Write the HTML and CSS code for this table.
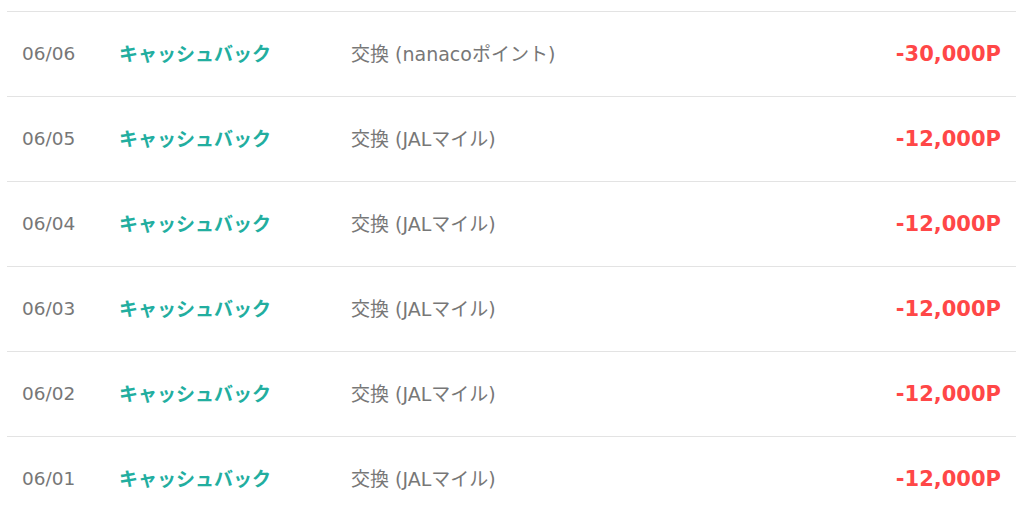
FILE: index.html
```html
<!DOCTYPE html>
<html lang="ja">
<head>
<meta charset="utf-8">
<link rel="stylesheet" href="styles.css">
</head>
<body>
<ul class="history">
  <li class="row"><span class="date">06/06</span><span class="cat">キャッシュバック</span><span class="desc">交換 (nanacoポイント)</span><span class="amount">-30,000P</span></li>
  <li class="row"><span class="date">06/05</span><span class="cat">キャッシュバック</span><span class="desc">交換 (JALマイル)</span><span class="amount">-12,000P</span></li>
  <li class="row"><span class="date">06/04</span><span class="cat">キャッシュバック</span><span class="desc">交換 (JALマイル)</span><span class="amount">-12,000P</span></li>
  <li class="row"><span class="date">06/03</span><span class="cat">キャッシュバック</span><span class="desc">交換 (JALマイル)</span><span class="amount">-12,000P</span></li>
  <li class="row"><span class="date">06/02</span><span class="cat">キャッシュバック</span><span class="desc">交換 (JALマイル)</span><span class="amount">-12,000P</span></li>
  <li class="row"><span class="date">06/01</span><span class="cat">キャッシュバック</span><span class="desc">交換 (JALマイル)</span><span class="amount">-12,000P</span></li>
</ul>
</body>
</html>
```
FILE: styles.css
```css
html, body {
  margin: 0;
  padding: 0;
  background: #fff;
}
body {
  font-family: "DejaVu Sans", "Noto Sans CJK JP", sans-serif;
  overflow: hidden;
}
.history {
  list-style: none;
  margin: 11px 8px 0 7px;
  padding: 0;
  border-top: 1px solid #e3e3e3;
}
.row {
  display: flex;
  align-items: center;
  height: 84px;
  border-bottom: 1px solid #e3e3e3;
  padding: 0 15px 0 15px;
}
.date {
  width: 97px;
  font-size: 18.5px;
  line-height: 1;
  color: #777;
}
.cat {
  width: 232px;
  font-size: 19px;
  line-height: 1;
  font-weight: bold;
  color: #22ae9f;
}
.desc {
  flex: 1;
  font-size: 19px;
  line-height: 1;
  color: #777;
}
.amount {
  font-size: 21px;
  line-height: 1;
  font-weight: bold;
  color: #ff4747;
}
```
